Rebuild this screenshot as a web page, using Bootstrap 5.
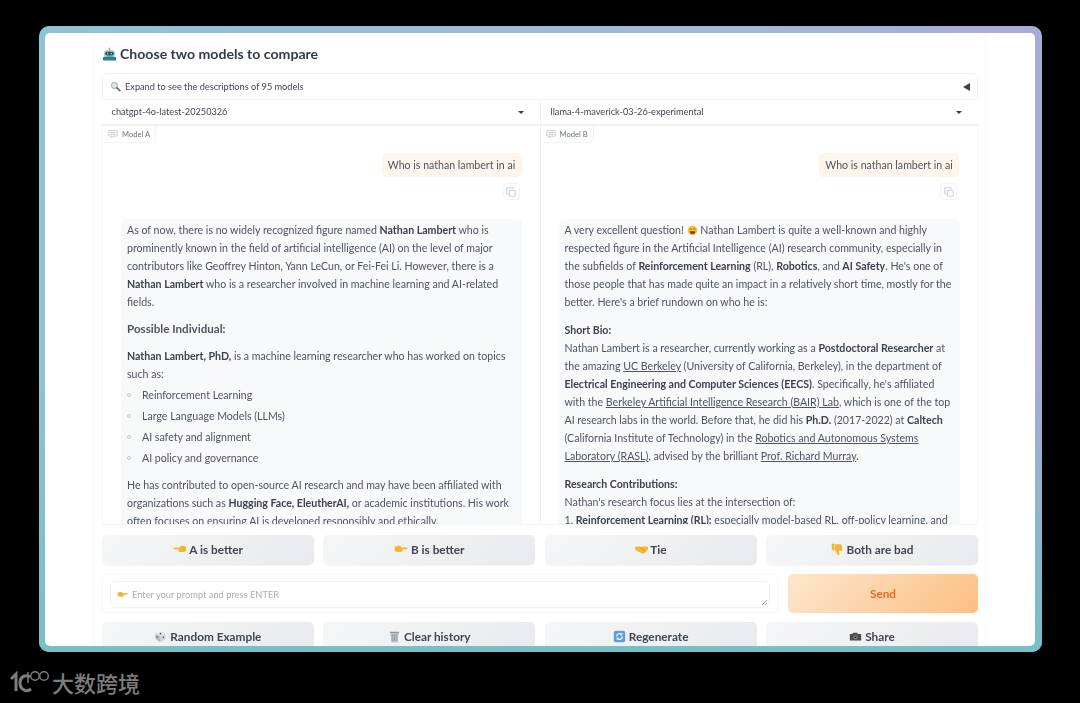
<!DOCTYPE html>
<html lang="en">
<head>
<meta charset="UTF-8">
<title>Choose two models to compare</title>
<link rel="stylesheet" href="https://cdn.jsdelivr.net/npm/bootstrap@5.3.0/dist/css/bootstrap.min.css">
<style>
html, body { height: 703px; overflow: hidden; }
body { background: #000; color: #3f4654; font-family: "Lato", "Liberation Sans", sans-serif; padding: 26px 38px 0 39px; }
.shot-frame { height: 626px; padding: 7px 7px 6px 6px; border-radius: 10px; background: linear-gradient(100deg, #8fc3d6 0%, #a3b7d8 60%, #a8a9da 100%); position: relative; overflow: hidden; filter: blur(.3px); }
.shot-frame::after { content: ""; position: absolute; left: 0; right: 0; bottom: 0; height: 45%; background: linear-gradient(180deg, rgba(118,192,196,0) 0%, #76c0c4 100%); pointer-events: none; }
.shot-inner { height: 100%; background: #fff; border-radius: 5px; overflow: hidden; position: relative; z-index: 1; padding: 0 49px 0 48px; }
.app-wrap { height: 100%; padding: 0 7px 0 8px; border-left: 1px solid #f6f7f8; border-right: 1px solid #f6f7f8; overflow: hidden; }
.pick-title { font-size: 14.1px; font-weight: 700; color: #333b49; height: 40px; padding-top: 2px; line-height: 22px; gap: 3px; }
.ico { display: inline-block; vertical-align: -2px; }
.expand-bar { height: 27px; border: 1px solid #f1f2f4; border-radius: 5px 5px 0 0; font-size: 9.2px; color: #3f4654; padding: 0 7px; }
.pick-row { height: 26px; border-bottom: 2px solid #eff0f2; font-size: 9.2px; color: #3f4654; }
.pick-cell { width: 50%; padding: 0 16px 0 9.5px; }
.pick-cell + .pick-cell { border-left: 1px solid #eff0f2; }
.pick-caret { width: 0; height: 0; border-left: 3px solid transparent; border-right: 3px solid transparent; border-top: 3px solid #374151; }
.chat-row { height: 399px; overflow: hidden; border-bottom: 1px solid #f1f2f4; border-right: 1px solid #f4f5f6; }
.chat-col { width: 50%; padding-right: 18px; position: relative; border-left: 1px solid #f4f5f6; }
.chat-col + .chat-col { border-left: 1px solid #eff0f2; }
.model-tag { position: absolute; left: 0; top: 0; height: 17px; line-height: 16px; padding: 0 5px; font-size: 7.6px; color: #6b7280; background: #fff; border: 1px solid #f1f2f4; border-top: 0; border-left: 0; border-radius: 0 0 5px 0; }
.user-line { padding-top: 27px; }
.user-bubble { width: 140px; height: 24px; line-height: 23px; font-size: 10.6px; text-align: center; color: #4b5563; background: #fef5ec; border: 1px solid #fef2e6; border-radius: 5px; }
.copy-btn { width: 17px; height: 17px; margin: 6px 2px 19px 0; border: 1px solid #f1f2f4; border-radius: 4px; }
.bot-box { margin-left: 18px; width: 401px; padding: 2px 6px 0; background: #f8f9fb; border-radius: 5px 5px 0 0; font-size: 10.6px; line-height: 18px; color: #4b5563; white-space: nowrap; }
.bot-box b { color: #3b4250; }
.bot-box p { margin: 0 0 10px; }
.bot-box a { color: #4b5563; }
.bot-head { font-size: 11.6px; font-weight: 700; color: #4b5563; margin: 0 0 10px; line-height: 16px; }
.bot-box .before-list { margin-bottom: 2px; }
.bot-list { list-style: none; padding: 0; margin: 0 0 7px; }
.bot-list li { height: 21px; line-height: 21px; padding-left: 15px; position: relative; }
.bot-list li::before { content: ""; position: absolute; left: 0; top: 8px; width: 4px; height: 4px; border: 1px solid #c3c8cf; border-radius: 50%; }
.act-row { gap: 9.5px; }
.act-btn { flex: 1 1 0; height: 30px; padding: 0; font-size: 11.8px; font-weight: 700; color: #3f4654; background: linear-gradient(135deg, #f5f6f7, #e8eaed); border: 0; border-radius: 5px; box-shadow: 0 1px 1px rgba(0,0,0,.04); }
.vote-row { margin-top: 10px; }
.input-row { margin-top: 9px; height: 39px; gap: 10px; }
.input-box { width: 676px; border: 1px solid #f3f4f6; border-radius: 5px; padding: 6px 7px; }
.input-inner { height: 27px; border: 1px solid #f1f2f4; border-radius: 5px; font-size: 9.3px; color: #a8adb6; padding: 0 6px; position: relative; }
.grip { position: absolute; right: 1px; bottom: 1px; }
.send-btn { flex: 1 1 0; font-size: 11.8px; font-weight: 700; color: #ea6a1c; background: linear-gradient(135deg, #fde6cd, #fcbf83); border: 0; border-radius: 5px; padding: 0; }
.tools-row { margin-top: 9px; }
.brand-strip { height: 48px; margin-left: -29px; color: #7d7d7d; font-family: "Noto Sans CJK SC", sans-serif; font-size: 22px; font-weight: 500; padding-top: 12px; }
</style>
</head>
<body>
<svg width="0" height="0" class="d-block">
  <defs>
    <symbol id="e-robot" viewBox="0 0 16 16"><path d="M8 1v2" stroke="#8a6a4a" stroke-width="1"/><circle cx="8" cy="1.6" r="1" fill="#e8a04a"/><rect x="2" y="3" width="12" height="9" rx="4" fill="#a9d8df"/><rect x="3.4" y="5" width="9.2" height="4" rx="2" fill="#2d4757"/><circle cx="6" cy="7" r=".9" fill="#7fe0ef"/><circle cx="10" cy="7" r=".9" fill="#7fe0ef"/><path d="M1 11c2-1 12-1 14 0v3.500H1z" fill="#2f7f94"/></symbol>
    <symbol id="e-glass" viewBox="0 0 16 16"><circle cx="6.5" cy="6.5" r="4.5" fill="#d6e6f2" stroke="#9aa3ad" stroke-width="1.4"/><path d="M10 10l4.500 4" stroke="#7a5a3c" stroke-width="2.200" stroke-linecap="round"/></symbol>
    <symbol id="e-grin" viewBox="0 0 16 16"><circle cx="8" cy="8" r="7" fill="#f5c33b"/><path d="M3.500 6.500l2-1 2 1M8.500 6.500l2-1 2 1" fill="none" stroke="#6b4a1c" stroke-width="1"/><path d="M4 9h8c0 3-2 4-4 4s-4-1-4-4z" fill="#7a3b1c"/></symbol>
    <symbol id="e-left" viewBox="0 0 16 16"><path d="M1 6.200h6.500c1-1.600 2.500-2 4.500-1.700l3 .5v5.500l-3 .8H7.500C6 10.800 6 9.300 6.600 8.200H1.400C.4 8 .4 6.400 1 6.200z" fill="#f6b52e"/></symbol>
    <symbol id="e-right" viewBox="0 0 16 16"><path d="M15 6.200H8.500C7.500 4.600 6 4.200 4 4.500L1 5v5.500l3 .8h4.500c1.500-.5 1.500-2 .9-3.100h5.200c1-.2 1-1.800.4-2z" fill="#f6b52e"/></symbol>
    <symbol id="e-shake" viewBox="0 0 16 16"><path d="M0 5l4-1 4 1 4-1 4 1v3l-5 5H8.500L5 11 0 8z" fill="#f6b52e"/><path d="M6 6l3 1.500 3 3" fill="none" stroke="#c98a1a" stroke-width=".9"/></symbol>
    <symbol id="e-down" viewBox="0 0 16 16"><path d="M1 1h3.200v8H1zM5 1.500h6.500c1 0 1.500.6 1.600 1.400L14 8c.1 1-.5 1.600-1.400 1.600H9.600l.6 3c.2 1.200-.3 2.400-1.300 2.400-.8 0-.9-.7-1.200-1.600C7.200 12 6 10.300 5 9.500z" fill="#f6b52e"/></symbol>
    <symbol id="e-dice" viewBox="0 0 16 16"><path d="M8 1.500l6 3v7l-6 3.500-6-3.500v-7z" fill="#e4e6ea"/><path d="M8 8v7l-6-3.500v-7z" fill="#b9bdc4"/><path d="M8 8v7l6-3.500v-7z" fill="#d1d4d9"/><circle cx="8" cy="4.500" r="1" fill="#444"/><circle cx="4" cy="8.500" r=".9" fill="#444"/><circle cx="11.500" cy="9" r=".9" fill="#444"/></symbol>
    <symbol id="e-bin" viewBox="0 0 16 16"><path d="M2.500 2h11v2h-11z" fill="#8e979f"/><path d="M3.200 4h9.600L12 15H4z" fill="#b4bcc3"/><path d="M5.500 5l.4 9M8 5v9M10.500 5l-.4 9" stroke="#8e979f" stroke-width=".7"/></symbol>
    <symbol id="e-redo" viewBox="0 0 16 16"><rect x="1" y="1" width="14" height="14" rx="2.500" fill="#5f9fd4"/><path d="M4.500 8a3.500 3.500 0 0 1 6-2.500M11.500 8a3.500 3.500 0 0 1-6 2.500" fill="none" stroke="#fff" stroke-width="1.400"/><path d="M11.500 3.500v3h-3zM4.500 12.500v-3h3z" fill="#fff"/></symbol>
    <symbol id="e-cam" viewBox="0 0 16 16"><path d="M1 5h3l1-1.500h5L11 5h4v8H1z" fill="#4a4d52"/><circle cx="8" cy="9" r="2.600" fill="#8a8e94"/><circle cx="8" cy="9" r="1.300" fill="#2a2c30"/></symbol>
    <symbol id="i-copy" viewBox="0 0 12 12"><path d="M4 4h7v7H4z M3 8.500H1V1h7.500v2" fill="none" stroke="#c2c6cc" stroke-width="1"/></symbol>
    <symbol id="i-chat" viewBox="0 0 12 12"><path d="M1 2h10v6.500H6.500L4.500 10.500v-2H1z M3 4.300h6M3 6.300h6" fill="none" stroke="#b6bac1" stroke-width=".9"/></symbol>
  </defs>
</svg>

<div class="shot-frame">
  <div class="shot-inner">
    <div class="app-wrap">
      <div class="pick-title d-flex align-items-center"><svg class="ico" width="15" height="15"><use href="#e-robot"/></svg>Choose two models to compare</div>

      <div class="expand-bar d-flex align-items-center justify-content-between">
        <span class="d-flex align-items-center gap-1"><svg width="11" height="11"><use href="#e-glass"/></svg>Expand to see the descriptions of 95 models</span>
        <span class="d-flex"><svg width="7" height="8" viewBox="0 0 7 8"><path d="M7 0v8L0 4z" fill="#374151"/></svg></span>
      </div>

      <div class="pick-row d-flex">
        <div class="pick-cell d-flex align-items-center justify-content-between"><span>chatgpt-4o-latest-20250326</span><span class="pick-caret"></span></div>
        <div class="pick-cell d-flex align-items-center justify-content-between"><span>llama-4-maverick-03-26-experimental</span><span class="pick-caret"></span></div>
      </div>

      <div class="chat-row d-flex">
        <div class="chat-col">
          <div class="model-tag d-flex align-items-center gap-1"><svg width="10" height="10"><use href="#i-chat"/></svg>Model A</div>
          <div class="user-line d-flex justify-content-end"><div class="user-bubble">Who is nathan lambert in ai</div></div>
          <div class="d-flex justify-content-end"><div class="copy-btn d-flex align-items-center justify-content-center"><svg width="10" height="10"><use href="#i-copy"/></svg></div></div>
          <div class="bot-box">
            <p>As of now, there is no widely recognized figure named <b>Nathan Lambert</b> who is<br>prominently known in the field of artificial intelligence (AI) on the level of major<br>contributors like Geoffrey Hinton, Yann LeCun, or Fei-Fei Li. However, there is a<br><b>Nathan Lambert</b> who is a researcher involved in machine learning and AI-related<br>fields.</p>
            <div class="bot-head">Possible Individual:</div>
            <p class="before-list"><b>Nathan Lambert, PhD,</b> is a machine learning researcher who has worked on topics<br>such as:</p>
            <ul class="bot-list">
              <li>Reinforcement Learning</li>
              <li>Large Language Models (LLMs)</li>
              <li>AI safety and alignment</li>
              <li>AI policy and governance</li>
            </ul>
            <p>He has contributed to open-source AI research and may have been affiliated with<br>organizations such as <b>Hugging Face, EleutherAI,</b> or academic institutions. His work<br>often focuses on ensuring AI is developed responsibly and ethically.</p>
          </div>
        </div>
        <div class="chat-col">
          <div class="model-tag d-flex align-items-center gap-1"><svg width="10" height="10"><use href="#i-chat"/></svg>Model B</div>
          <div class="user-line d-flex justify-content-end"><div class="user-bubble">Who is nathan lambert in ai</div></div>
          <div class="d-flex justify-content-end"><div class="copy-btn d-flex align-items-center justify-content-center"><svg width="10" height="10"><use href="#i-copy"/></svg></div></div>
          <div class="bot-box">
            <p>A very excellent question! <svg class="ico" width="11" height="11"><use href="#e-grin"/></svg> Nathan Lambert is quite a well-known and highly<br>respected figure in the Artificial Intelligence (AI) research community, especially in<br>the subfields of <b>Reinforcement Learning</b> (RL), <b>Robotics</b>, and <b>AI Safety</b>. He's one of<br>those people that has made quite an impact in a relatively short time, mostly for the<br>better. Here's a brief rundown on who he is:</p>
            <p><b>Short Bio:</b><br>Nathan Lambert is a researcher, currently working as a <b>Postdoctoral Researcher</b> at<br>the amazing <a href="#">UC Berkeley</a> (University of California, Berkeley), in the department of<br><b>Electrical Engineering and Computer Sciences (EECS)</b>. Specifically, he's affiliated<br>with the <a href="#">Berkeley Artificial Intelligence Research (BAIR) Lab</a>, which is one of the top<br>AI research labs in the world. Before that, he did his <b>Ph.D.</b> (2017-2022) at <b>Caltech</b><br>(California Institute of Technology) in the <a href="#">Robotics and Autonomous Systems</a><br><a href="#">Laboratory (RASL)</a>, advised by the brilliant <a href="#">Prof. Richard Murray</a>.</p>
            <p><b>Research Contributions:</b><br>Nathan's research focus lies at the intersection of:<br>1. <b>Reinforcement Learning (RL):</b> especially model-based RL, off-policy learning, and</p>
          </div>
        </div>
      </div>

      <div class="act-row vote-row d-flex">
        <button class="btn act-btn"><svg class="ico" width="14" height="14"><use href="#e-left"/></svg> A is better</button>
        <button class="btn act-btn"><svg class="ico" width="14" height="14"><use href="#e-right"/></svg> B is better</button>
        <button class="btn act-btn"><svg class="ico" width="13" height="13"><use href="#e-shake"/></svg> Tie</button>
        <button class="btn act-btn"><svg class="ico" width="13" height="13"><use href="#e-down"/></svg> Both are bad</button>
      </div>

      <div class="input-row d-flex">
        <div class="input-box">
          <div class="input-inner d-flex align-items-center gap-1"><svg width="11" height="11"><use href="#e-right"/></svg>Enter your prompt and press ENTER
            <svg class="grip" width="7" height="7" viewBox="0 0 7 7"><path d="M1 6l5-5M4 6l2-2" stroke="#8b8f96" stroke-width=".8"/></svg>
          </div>
        </div>
        <button class="btn send-btn">Send</button>
      </div>

      <div class="act-row tools-row d-flex">
        <button class="btn act-btn"><svg class="ico" width="13" height="13"><use href="#e-dice"/></svg> Random Example</button>
        <button class="btn act-btn"><svg class="ico" width="13" height="13"><use href="#e-bin"/></svg> Clear history</button>
        <button class="btn act-btn"><svg class="ico" width="13" height="13"><use href="#e-redo"/></svg> Regenerate</button>
        <button class="btn act-btn"><svg class="ico" width="13" height="13"><use href="#e-cam"/></svg> Share</button>
      </div>
    </div>
  </div>
</div>

<div class="brand-strip d-flex align-items-center">
  <svg width="42" height="24" viewBox="0 0 42 24"><path d="M1 9l5-5v17" fill="none" stroke="#7d7d7d" stroke-width="3"/><path d="M20 7c-5-3-10 0-10 6s6 10 11 6" fill="none" stroke="#7d7d7d" stroke-width="3"/><path d="M18 2v11" stroke="#7d7d7d" stroke-width="1.500"/><circle cx="25" cy="6" r="4.300" fill="none" stroke="#7d7d7d" stroke-width="1.500"/><circle cx="34" cy="6" r="4.300" fill="none" stroke="#7d7d7d" stroke-width="1.500"/></svg>
  <span>大数跨境</span>
</div>
</body>
</html>
